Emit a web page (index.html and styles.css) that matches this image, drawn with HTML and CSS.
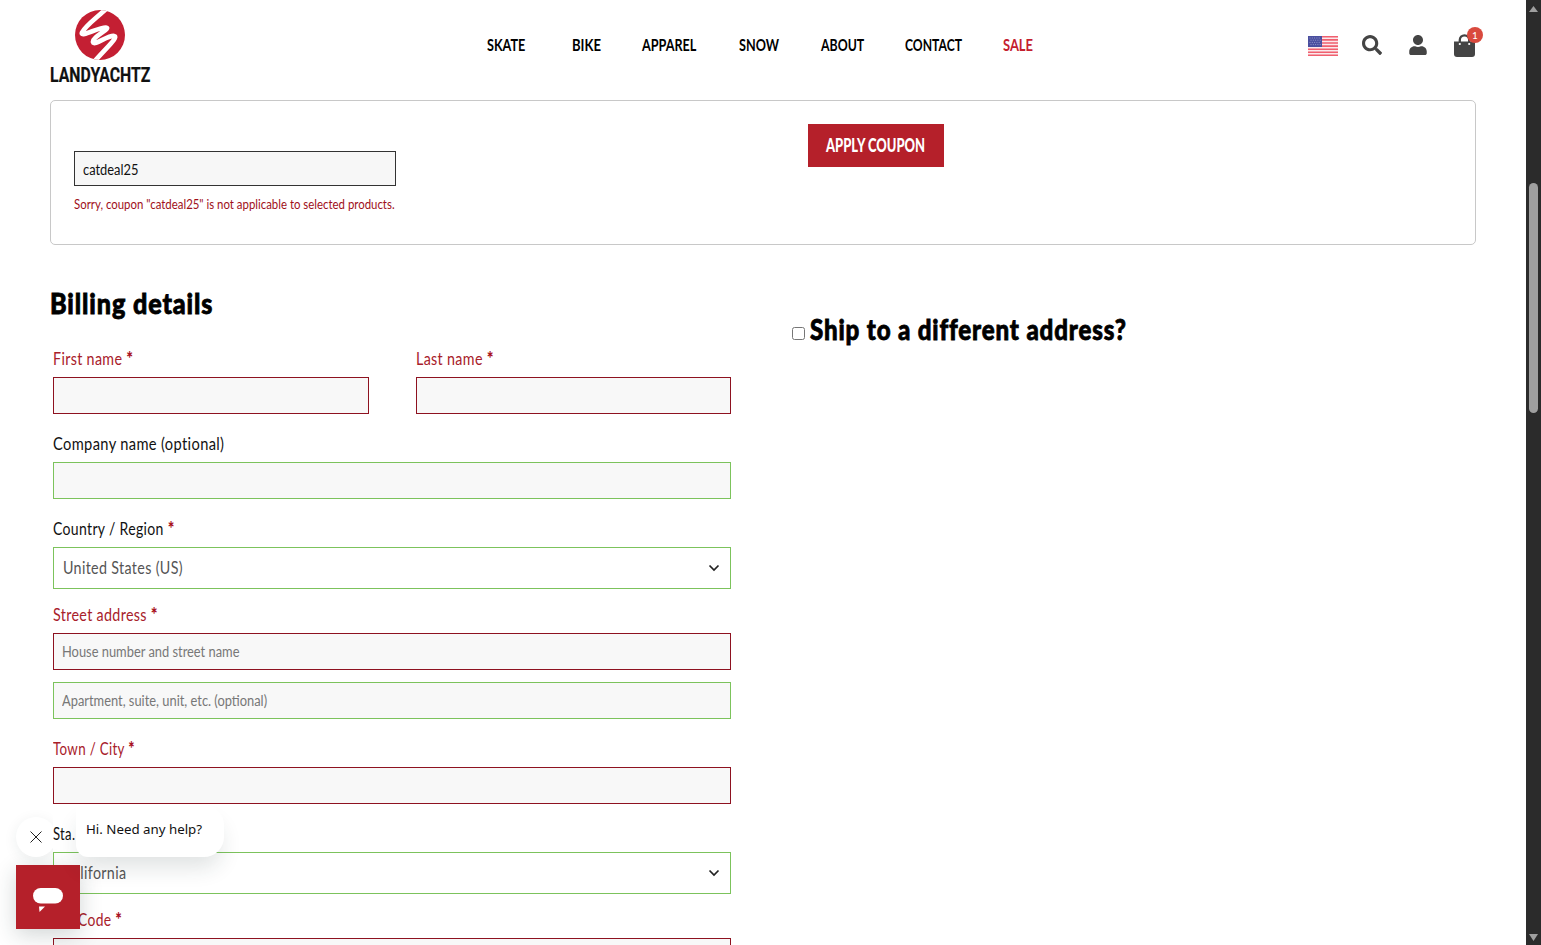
FILE: index.html
```html
<!DOCTYPE html>
<html lang="en">
<head>
<meta charset="utf-8">
<title>Checkout - Landyachtz</title>
<link rel="stylesheet" href="styles.css">
</head>
<body>
<div class="page">
  <header class="header">
    <a class="logo">
      <svg class="logo-mark" width="52" height="52" viewBox="0 0 52 52">
        <defs><clipPath id="disc"><circle cx="26" cy="26" r="25"/></clipPath></defs>
        <circle cx="26" cy="26" r="25" fill="#c41f33"/>
        <path clip-path="url(#disc)" d="M34 -2 C24 8 12 16 8 23.500 C6 29 25 18 32 18.500 C38 19 18 28 19 33 C20 37.500 34 26 40 27 C45 28 32 39 20 53" fill="none" stroke="#fff" stroke-width="4.700" stroke-linejoin="round"/>
      </svg>
      <span class="logo-name"><span class="t">LANDYACHTZ</span></span>
    </a>
    <nav class="nav">
      <a class="n1"><span class="t">SKATE</span></a>
      <a class="n2"><span class="t">BIKE</span></a>
      <a class="n3"><span class="t">APPAREL</span></a>
      <a class="n4"><span class="t">SNOW</span></a>
      <a class="n5"><span class="t">ABOUT</span></a>
      <a class="n6"><span class="t">CONTACT</span></a>
      <a class="sale"><span class="t">SALE</span></a>
    </nav>
    <div class="tools">
      <svg class="flag" width="30" height="20" viewBox="0 0 30 20">
        <rect width="30" height="20" fill="#fbe9ec"/>
        <path d="M0 .8H30M0 3.900H30M0 7H30M0 10.100H30M0 13.200H30M0 16.300H30M0 19.300H30" stroke="#f0606f" stroke-width="1.600"/>
        <rect width="14" height="11" fill="#4a4f9f"/>
        <path d="M1.500 2H13M2.500 4.200H13M1.500 6.400H13M2.500 8.600H13" stroke="#9da0d0" stroke-width=".9" stroke-dasharray="1 1.300"/>
      </svg>
      <svg class="search" width="20" height="20" viewBox="0 0 512 512"><path fill="#444" d="M505 442.700 405.300 343c-4.500-4.500-10.600-7-17-7H372c27.600-35.300 44-79.700 44-128C416 93.100 322.900 0 208 0S0 93.100 0 208s93.100 208 208 208c48.300 0 92.700-16.400 128-44v16.300c0 6.400 2.500 12.500 7 17l99.700 99.700c9.400 9.400 24.600 9.400 33.900 0l28.300-28.300c9.400-9.400 9.400-24.600.1-34zM208 336c-70.700 0-128-57.200-128-128 0-70.700 57.200-128 128-128 70.700 0 128 57.200 128 128 0 70.700-57.200 128-128 128z"/></svg>
      <svg class="user" width="18" height="20" viewBox="0 0 448 512"><path fill="#444" d="M224 256c70.700 0 128-57.300 128-128S294.700 0 224 0 96 57.300 96 128s57.300 128 128 128zm89.600 32h-16.700c-22.200 10.200-46.900 16-72.900 16s-50.600-5.800-72.900-16h-16.700C60.200 288 0 348.200 0 422.400V464c0 26.500 21.500 48 48 48h352c26.500 0 48-21.500 48-48v-41.600c0-74.200-60.200-134.400-134.400-134.400z"/></svg>
      <span class="bag">
        <svg width="21" height="24" viewBox="0 0 21 24"><path d="M5.800 10V6a4.700 4.700 0 0 1 9.400 0v4" fill="none" stroke="#444" stroke-width="2.300"/><path d="M0 7.500H21V20a3 3 0 0 1-3 3H3a3 3 0 0 1-3-3Z" fill="#444"/><circle cx="5.800" cy="10" r="1.100" fill="#fff"/><circle cx="15.200" cy="10" r="1.100" fill="#fff"/></svg>
        <span class="badge">1</span>
      </span>
    </div>
  </header>

  <section class="coupon">
    <div class="coupon-entry">
      <div class="coupon-input"><span class="t">catdeal25</span></div>
      <p class="coupon-error"><span class="t">Sorry, coupon "catdeal25" is not applicable to selected products.</span></p>
    </div>
    <div class="coupon-action"><button class="apply"><span class="t">APPLY COUPON</span></button></div>
  </section>

  <main class="columns">
    <section class="billing">
      <h3 class="heading"><span class="t">Billing details</span></h3>
      <div class="fields">
        <div class="pair">
          <div class="field invalid"><label><span class="t">First name <b>*</b></span></label><div class="input"></div></div>
          <div class="field invalid"><label><span class="t">Last name <b>*</b></span></label><div class="input"></div></div>
        </div>
        <div class="field valid company"><label><span class="t">Company name (optional)</span></label><div class="input"></div></div>
        <div class="field valid short country"><label><span class="t">Country / Region <b>*</b></span></label>
          <div class="select"><span class="t">United States (US)</span><svg width="12" height="8" viewBox="0 0 12 8"><path d="M1.500 1.500 6 6l4.500-4.500" fill="none" stroke="#222" stroke-width="1.700"/></svg></div></div>
        <div class="field invalid line"><label><span class="t">Street address <b>*</b></span></label><div class="input"><span class="t">House number and street name</span></div></div>
        <div class="field valid"><div class="input"><span class="t">Apartment, suite, unit, etc. (optional)</span></div></div>
        <div class="field invalid town"><label><span class="t">Town / City <b>*</b></span></label><div class="input"></div></div>
        <div class="field valid short state"><label><span class="t">Sta.</span></label>
          <div class="select"><span class="t">California</span><svg width="12" height="8" viewBox="0 0 12 8"><path d="M1.500 1.500 6 6l4.500-4.500" fill="none" stroke="#222" stroke-width="1.700"/></svg></div></div>
        <div class="field invalid zip"><label><span class="t">ZIP Code <b>*</b></span></label><div class="input"></div></div>
      </div>
    </section>
    <section class="shipping">
      <span class="check"></span><h3 class="heading"><span class="t">Ship to a different address?</span></h3>
    </section>
  </main>

  <aside class="chat">
    <div class="chat-row">
      <span class="chat-close"><svg width="12" height="12" viewBox="0 0 12 12"><path d="M.5.5l11 11M11.500.5l-11 11" stroke="#222" stroke-width="1"/></svg></span>
      <span class="chat-bubble">Hi. Need any help?</span>
    </div>
    <div class="chat-button"><svg width="30" height="26" viewBox="0 0 30 26"><rect width="30" height="15.500" rx="7.700" fill="#fff"/><path d="M6 18.500H12L6.500 24Z" fill="#fff"/></svg></div>
  </aside>
</div>
<div class="scrollbar">
  <svg width="9" height="6" viewBox="0 0 9 6"><path d="M4.500 0 9 6H0Z" fill="#9f9f9f"/></svg>
  <div class="thumb"></div>
  <svg class="down" width="9" height="7" viewBox="0 0 9 7"><path d="M0 0H9L4.500 7Z" fill="#9f9f9f"/></svg>
</div>
</body>
</html>
```
FILE: styles.css
```css
* { box-sizing: border-box; }
body { margin: 0; display: flex; width: 1541px; height: 945px; overflow: hidden; background: #fff; color: #111; font-family: Lato, "Liberation Sans", sans-serif; }
.page { position: relative; width: 1526px; height: 945px; overflow: hidden; }
.t { display: inline-block; white-space: nowrap; transform-origin: 0 50%; transform: scaleX(var(--sx, .8)); }

.header { height: 100px; display: grid; grid-template-columns: 437px 1fr 176px; padding: 0 42px 0 50px; }
.logo { display: flex; flex-direction: column; width: 100px; padding-top: 9px; }
.logo-mark { align-self: center; }
.logo-name { height: 24px; line-height: 28px; font-family: Roboto, sans-serif; font-size: 20px; font-weight: 700; -webkit-text-stroke: .2px #111; --sx: .79; }
.nav { display: grid; grid-template-columns: 85px 70px 97px 82px 84px 98px 60px; height: 90px; line-height: 89px; font-size: 17px; font-weight: 700; color: #000; --sx: .742; }
.n2 { --sx: .77; }
.n5 { --sx: .725; }
.n6 { --sx: .715; }
.sale { color: #c4202f; --sx: .76; }
.tools { display: flex; align-items: flex-start; }
.flag { margin: 36px 24px 0 0; }
.search { margin: 35px 27px 0 0; }
.user { margin: 35px 27px 0 0; }
.bag { position: relative; margin-top: 34px; height: 24px; }
.badge { position: absolute; left: 13px; top: -7px; width: 16px; height: 16px; border-radius: 50%; background: #d94a3e; color: #fff; font-size: 10px; line-height: 16px; text-align: center; }

.coupon { display: grid; grid-template-columns: 734px 1fr; margin: 0 50px; height: 145px; border: 1px solid #c8c8c8; border-radius: 5px; padding: 23px; }
.coupon-entry { padding-top: 27px; }
.coupon-input { width: 322px; height: 35px; border: 1px solid #333; background: #f7f7f7; padding-left: 8px; font-size: 15.500px; line-height: 34px; --sx: .83; }
.coupon-error { margin: 8px 0 0; line-height: 20px; font-size: 14px; color: #a00f1a; --sx: .815; }
.apply { display: block; width: 136px; height: 43px; border: 0; padding: 0 0 0 18px; text-align: left; background: #b5202a; color: #fff; font: 900 18px/43px Lato, sans-serif; --sx: .72; }

.columns { display: grid; grid-template-columns: 681px 1fr; column-gap: 61px; padding: 39px 50px 0; }
.heading { margin: 0; height: 40px; line-height: 39px; font-size: 28px; font-weight: 900; letter-spacing: 1px; color: #000; white-space: nowrap; -webkit-text-stroke: .8px #000; --sx: .897; }
.shipping .heading { --sx: .86; }
.fields { padding: 20px 0 0 3px; }
.pair { display: grid; grid-template-columns: 316px 315px; column-gap: 47px; }
.field { margin-bottom: 15px; }
.field.short { margin-bottom: 11px; }
.field.line { margin-bottom: 12px; }
label { display: block; height: 30px; line-height: 30px; margin-bottom: 3px; font-size: 17px; letter-spacing: .4px; --sx: .84; }
label b { color: #a8101c; font-weight: 900; font-size: 19px; line-height: 1; }
.company label { --sx: .863; }
.country label { --sx: .825; }
.town label { --sx: .785; }
.zip label { --sx: .815; }
.state label { --sx: .77; }
.invalid label { color: #a8202a; }
.input { height: 37px; border: 1px solid #8e1220; background: #f8f8f8; padding-left: 8px; font-size: 15.500px; line-height: 34px; color: #777; --sx: .83; }
.valid .input, .select { border-color: #7cc35c; }
.select { display: flex; justify-content: space-between; align-items: center; height: 42px; border: 1px solid #7cc35c; padding: 0 10px 0 9px; font-size: 17px; line-height: 20px; letter-spacing: .4px; color: #555; --sx: .84; }
.shipping { display: flex; padding-top: 26px; }
.check { width: 13px; height: 13px; margin: 17px 5px 0 0; border: 1px solid #767676; border-radius: 2.500px; background: #fff; }

.chat { position: absolute; left: 16px; top: 802px; }
.chat-row { display: flex; align-items: flex-end; gap: 20px; height: 55px; }
.chat-close { display: flex; align-items: center; justify-content: center; width: 40px; height: 40px; border-radius: 50%; background: #fff; box-shadow: 0 3px 14px rgba(30, 50, 50, .08); clip-path: inset(-20px 3px -20px -20px); }
.chat-bubble { width: 148px; height: 52px; padding-left: 10px; border-radius: 4px 20px 20px 12px; background: #fff; box-shadow: 0 14px 22px -4px rgba(30, 50, 50, .14); font: 13.300px/48px "Noto Sans", sans-serif; color: #111; }
.chat-button { display: flex; justify-content: center; width: 64px; height: 64px; margin-top: 8px; padding-top: 23px; background: #b5202a; box-shadow: 0 6px 22px rgba(30, 50, 50, .2); }

.scrollbar { display: flex; flex-direction: column; align-items: center; width: 15px; height: 945px; padding: 6px 0 4px; background: #2b2b2b; }
.thumb { width: 9px; height: 230px; margin-top: 171px; border-radius: 5px; background: #9f9f9f; }
.down { margin-top: auto; }
```
